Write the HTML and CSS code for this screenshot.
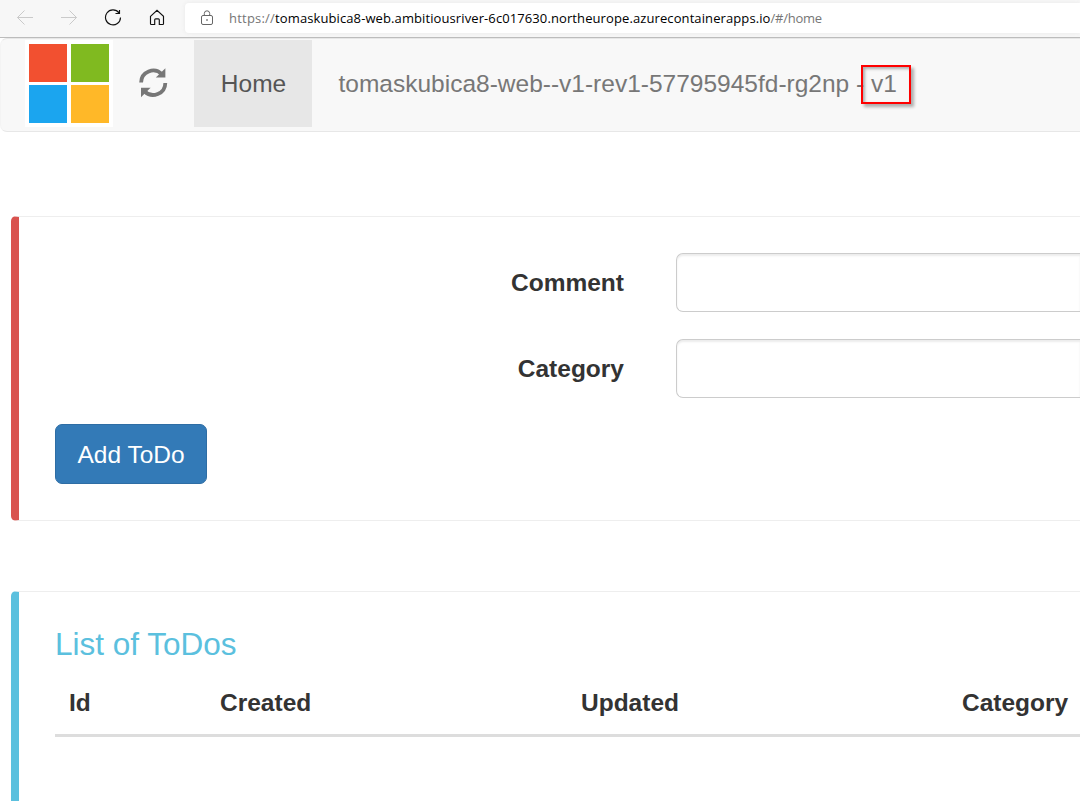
FILE: index.html
```html
<!DOCTYPE html>
<html lang="en">
<head>
<meta charset="utf-8">
<title>ToDo</title>
<link rel="stylesheet" href="styles.css">
</head>
<body>
<header class="toolbar">
  <svg class="tool" width="18" height="18" viewBox="0 0 18 18" stroke="#cacaca"><path d="M17 9.500H1.500M8.500 2.500l-7 7 7 7"/></svg>
  <svg class="tool" width="18" height="18" viewBox="0 0 18 18" stroke="#cacaca"><path d="M1 9.500h15.500M9.500 2.500l7 7-7 7"/></svg>
  <svg class="tool" width="18" height="18" viewBox="0 0 18 18" stroke="#111"><path stroke-width="1.150" d="M15 4.900A7.500 7.500 0 1 0 16.500 9.500M15.500 2v3.500H11.500"/></svg>
  <svg class="tool" width="18" height="18" viewBox="0 0 18 18" stroke="#111"><path stroke-width="1.150" d="M2.500 8.300 9 2.300l6.500 6v7.400q0 .8-.8.8h-3.400v-4.700a1 1 0 0 0-1-1H7.700a1 1 0 0 0-1 1v4.700H3.300q-.8 0-.8-.8z"/></svg>
  <div class="address">
    <svg class="lock" width="14" height="16" viewBox="0 0 14 16"><rect x="1.500" y="5.500" width="11" height="9" rx="1.500"/><path d="M4.300 5.500V3.500a2.700 2.700 0 0 1 5.400 0v2"/><circle cx="7" cy="10" r=".5"/></svg>
    <div class="url"><span class="scheme">https://</span><b>tomaskubica8-web.ambitiousriver-6c017630.northeurope.azurecontainerapps.io</b><span>/#/home</span></div>
  </div>
</header>
<nav class="navbar">
  <div class="logo"><i class="red"></i><i class="green"></i><i class="blue"></i><i class="yellow"></i></div>
  <svg class="refresh" width="30" height="30" viewBox="0 0 30 30"><g id="half"><path class="arc" d="M3.100 14.500A12.100 12.100 0 0 1 23.800 6.100"/><path class="head" d="M27.400.2V9.600H17.800z"/></g><g transform="rotate(180 15.200 14.700)"><path class="arc" d="M3.100 14.500A12.100 12.100 0 0 1 23.800 6.100"/><path class="head" d="M27.400.2V9.600H17.800z"/></g></svg>
  <a class="home">Home</a>
  <div class="revision">tomaskubica8-web--v1-rev1-57795945fd-rg2np - v1<span class="marker"></span></div>
</nav>
<main class="content">
  <section class="callout danger">
    <form>
      <div class="row"><label for="comment">Comment</label><input id="comment"></div>
      <div class="row"><label for="category">Category</label><input id="category"></div>
      <button type="button">Add ToDo</button>
    </form>
  </section>
  <section class="callout info">
    <h4>List of ToDos</h4>
    <div class="thead"><span>Id</span><span>Created</span><span>Updated</span><span>Category</span></div>
  </section>
</main>
</body>
</html>
```
FILE: styles.css
```css
* { box-sizing: border-box; }
body {
  margin: 0;
  height: 801px;
  overflow: hidden;
  background: #fff;
  color: #333;
  font: 24.5px/35px "Liberation Sans", Arial, sans-serif;
}
.toolbar {
  height: 38px;
  display: flex;
  align-items: flex-start;
  padding: 3px 0 0 16px;
  background: #f7f7f7;
  border-bottom: 1px solid #bcbcbc;
}
.tool { flex: none; margin: 5px 26px 0 0; fill: none; }
.address {
  flex: 1;
  height: 30px;
  margin-left: -7px;
  display: flex;
  align-items: center;
  background: #fff;
  border-radius: 4px 0 0 4px;
  box-shadow: 0 0 4px #e8e8e8;
  padding-left: 15px;
}
.lock { fill: none; stroke: #666; margin-right: 15px; }
.url {
  font: 13px/20px "Open Sans", sans-serif;
  letter-spacing: -0.25px;
  white-space: nowrap;
  color: #767676;
}
.url .scheme { letter-spacing: 0.22px; }
.url b { font-weight: 400; color: #000; letter-spacing: 0.1px; }
.navbar {
  height: 94px;
  display: flex;
  align-items: flex-start;
  padding: 1px 0 0 24px;
  background: #f8f8f8;
  border: 1px solid #e7e7e7;
  border-width: 1px 0 1px 1px;
  border-left-color: #f4f4f4;
  border-radius: 7px 0 0 7px;
}
.logo {
  width: 88px;
  height: 87px;
  flex: none;
  display: grid;
  grid-template-columns: 38px 38px;
  grid-template-rows: 38px 38px;
  gap: 3px 4px;
  padding: 4px;
  background: #fff;
}
.red { background: #f25030; }
.green { background: #80ba20; }
.blue { background: #1ba5ef; }
.yellow { background: #ffb828; }
.refresh { flex: none; margin: 28px 0 0 25px; }
.arc { fill: none; stroke: #777; stroke-width: 3.800; }
.head { fill: #777; }
.home {
  width: 118px;
  height: 87px;
  margin-left: 26px;
  padding-left: 1px;
  background: #e7e7e7;
  color: #555;
  text-align: center;
  line-height: 87px;
}
.revision {
  position: relative;
  margin-left: 26px;
  padding-left: 0.500px;
  line-height: 87px;
  color: #777;
  white-space: nowrap;
}
.marker {
  position: absolute;
  left: 523px;
  top: 25px;
  width: 50px;
  height: 39px;
  border: 2px solid #f00;
  box-shadow: 3px 3px 3px rgba(0,0,0,.3), inset 2px 2px 3px rgba(0,0,0,.3);
}
.content { padding: 84px 0 0 11px; }
.callout {
  border: 1px solid #eee;
  border-left: 8px solid;
  border-right: 0;
  border-radius: 5px 0 0 5px;
  padding: 36px 0 0 36px;
}
.danger { height: 305px; border-left-color: #d9534f; }
.info {
  height: 210px;
  margin-top: 70px;
  padding-top: 35px;
  border-left-color: #5bc0de;
  border-bottom: 0;
  border-radius: 5px 0 0;
}
.row { display: flex; height: 59px; margin-bottom: 27px; }
.row label {
  width: 569px;
  margin-right: 52px;
  text-align: right;
  font-weight: 700;
  line-height: 59px;
}
.row input {
  flex: 1;
  min-width: 0;
  border: 1px solid #ccc;
  border-right: 0;
  border-radius: 7px 0 0 7px;
  box-shadow: inset 0 2px 2px rgba(0,0,0,.075);
}
button {
  display: block;
  width: 152px;
  height: 60px;
  margin-top: -1px;
  padding: 0;
  border: 1px solid #2e6da4;
  border-radius: 7px;
  background: #337ab7;
  color: #fff;
  font: inherit;
}
h4 { margin: 0; color: #5bc0de; font-size: 31.5px; font-weight: 400; line-height: 35px; }
.thead {
  display: grid;
  grid-template-columns: 151px 361px 381px 1fr;
  height: 75px;
  padding: 23px 0 0 14px;
  border-bottom: 3px solid #ddd;
  font-weight: 700;
}
```
